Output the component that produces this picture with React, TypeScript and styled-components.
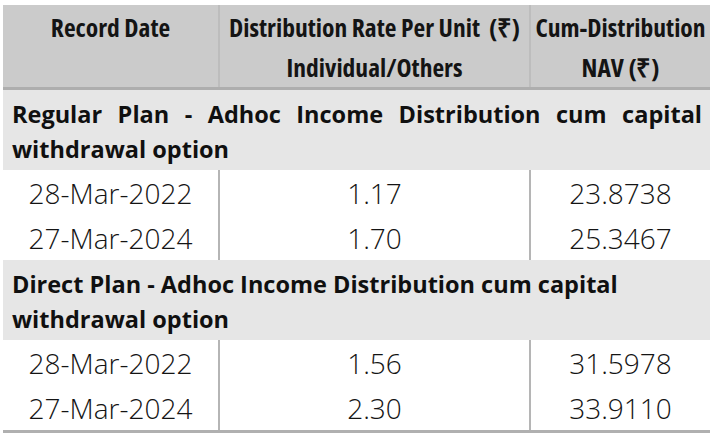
import React from 'react';
import styled, { createGlobalStyle } from 'styled-components';

const GlobalStyle = createGlobalStyle`
  html, body {
    margin: 0;
    padding: 0;
    background: #ffffff;
  }
`;

const Page = styled.div`
  padding: 5px 7px 0 3px;
`;

const Table = styled.table`
  width: 707px;
  border-collapse: collapse;
  table-layout: fixed;
  color: #141414;
`;

const HeadCell = styled.th`
  background: #cbcbcb;
  font-family: "Open Sans", sans-serif;
  font-stretch: 75%;
  font-weight: 700;
  font-size: 25.5px;
  line-height: 40px;
  white-space: nowrap;
  text-align: center;
  vertical-align: top;
  padding: 2px 0 0;
  border-bottom: 3px solid #aeaeae;
  & + & {
    border-left: 2px solid #bdbdbd;
  }
`;

const GroupCell = styled.td`
  background: #e6e6e6;
  padding: 7px 8px 3px 9px;
`;

const GroupLine = styled.div<{ $justify?: boolean }>`
  font-family: "Open Sans", sans-serif;
  font-weight: 700;
  font-size: 23.5px;
  line-height: 35px;
  color: #101010;
  white-space: ${(p) => (p.$justify ? 'normal' : 'nowrap')};
  text-align: ${(p) => (p.$justify ? 'justify' : 'left')};
  text-align-last: ${(p) => (p.$justify ? 'justify' : 'left')};
`;

const DataCell = styled.td`
  font-family: "Open Sans", sans-serif;
  font-weight: 350;
  font-size: 28px;
  height: 45px;
  padding: 0;
  text-align: center;
  vertical-align: middle;
  & + & {
    border-left: 2px solid #b5b5b5;
  }
`;

const LastRow = styled.tr`
  td {
    border-bottom: 3px solid #b0b0b0;
  }
`;

type Row = { date: string; rate: string; nav: string };

const groups: { title: [string, string]; justify: boolean; rows: Row[] }[] = [
  {
    title: ['Regular Plan - Adhoc Income Distribution cum capital', 'withdrawal option'],
    justify: true,
    rows: [
      { date: '28-Mar-2022', rate: '1.17', nav: '23.8738' },
      { date: '27-Mar-2024', rate: '1.70', nav: '25.3467' },
    ],
  },
  {
    title: ['Direct Plan - Adhoc Income Distribution cum capital', 'withdrawal option'],
    justify: false,
    rows: [
      { date: '28-Mar-2022', rate: '1.56', nav: '31.5978' },
      { date: '27-Mar-2024', rate: '2.30', nav: '33.9110' },
    ],
  },
];

export default function App() {
  return (
    <Page>
      <GlobalStyle />
      <Table>
        <colgroup>
          <col style={{ width: 216 }} />
          <col style={{ width: 311 }} />
          <col style={{ width: 180 }} />
        </colgroup>
        <thead>
          <tr>
            <HeadCell>Record Date</HeadCell>
            <HeadCell>
              Distribution Rate Per Unit&nbsp; (₹)
              <br />
              Individual/Others
            </HeadCell>
            <HeadCell>
              Cum-Distribution
              <br />
              NAV (₹)
            </HeadCell>
          </tr>
        </thead>
        <tbody>
          {groups.map((group, gi) => (
            <React.Fragment key={gi}>
              <tr>
                <GroupCell colSpan={3}>
                  <GroupLine $justify={group.justify}>{group.title[0]}</GroupLine>
                  <GroupLine>{group.title[1]}</GroupLine>
                </GroupCell>
              </tr>
              {group.rows.map((row, ri) => {
                const cells = (
                  <>
                    <DataCell>{row.date}</DataCell>
                    <DataCell>{row.rate}</DataCell>
                    <DataCell>{row.nav}</DataCell>
                  </>
                );
                return gi === groups.length - 1 && ri === group.rows.length - 1 ? (
                  <LastRow key={ri}>{cells}</LastRow>
                ) : (
                  <tr key={ri}>{cells}</tr>
                );
              })}
            </React.Fragment>
          ))}
        </tbody>
      </Table>
    </Page>
  );
}
